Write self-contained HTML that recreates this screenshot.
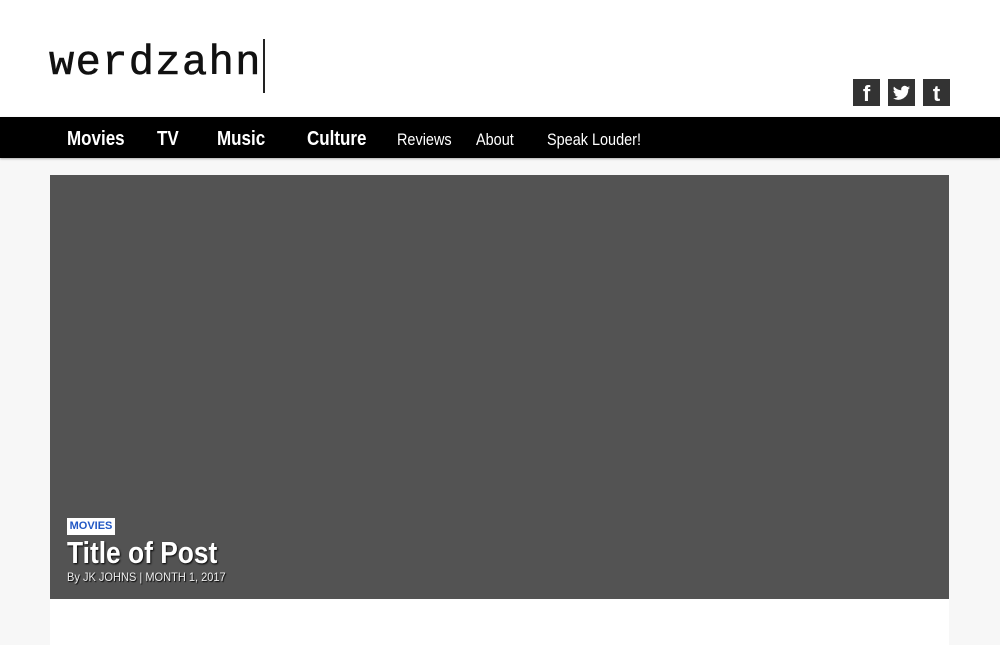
<!DOCTYPE html>
<html><head><meta charset="utf-8"><style>
*{margin:0;padding:0;box-sizing:border-box}
body{width:1000px;height:640px;overflow:hidden;background:#f7f7f7;font-family:"Liberation Sans",sans-serif;position:relative}
.header{position:absolute;left:0;top:0;width:1000px;height:117px;background:#fff}
.logo{position:absolute;left:49px;top:39px;font-family:"Liberation Mono",monospace;font-size:42px;color:#111;letter-spacing:1.4px;-webkit-text-stroke:0.6px #111}
.cursor{position:absolute;left:263px;top:39px;width:2px;height:54px;background:#222}
.soc{position:absolute;top:79px;width:27px;height:27px;background:#333;color:#fff;font-weight:bold;text-align:center;line-height:29px;font-size:22px}
.nav{position:absolute;left:0;top:117px;width:1000px;height:41px;background:#000;box-shadow:0 1px 2px rgba(0,0,0,.3)}
.nav span{position:absolute;top:11px;color:#fff;font-size:20px;font-weight:bold;transform:scaleX(.85);transform-origin:0 0;white-space:nowrap}
.nav span.l{font-weight:normal;font-size:17px;top:13px}
.panel{position:absolute;left:50px;top:175px;width:899px;height:470px;background:#fff}
.img{position:absolute;left:50px;top:175px;width:899px;height:424px;background:#535353}
.tag{position:absolute;left:67px;top:518px;width:48px;height:17px;background:#fff;color:#2157c4;font-size:11px;font-weight:bold;text-align:center;line-height:17px}
.title{position:absolute;left:67px;top:535px;color:#fff;font-size:31px;font-weight:bold;text-shadow:1px 1px 2px #000;transform:scaleX(.85);transform-origin:0 0;white-space:nowrap}
.by{position:absolute;left:67px;top:570px;color:#eee;font-size:12px;text-shadow:1px 1px 1px #000;transform:scaleX(.92);transform-origin:0 0;white-space:nowrap}
</style></head><body>
<div class="header">
<div class="logo">werdzahn</div><div class="cursor"></div>
<div class="soc" style="left:853px">f</div>
<div class="soc" style="left:888px"><svg width="27" height="27" viewBox="0 0 27 27"><path fill="#fff" d="M22 8.5c-.6.3-1.3.5-2 .6.7-.4 1.3-1.1 1.5-1.9-.7.4-1.4.7-2.2.8a3.5 3.5 0 0 0-6 3.2C10.400 11.100 7.800 9.700 6 7.600c-.9 1.600-.4 3.600 1.100 4.600-.6 0-1.100-.2-1.600-.4 0 1.700 1.200 3.100 2.800 3.400-.5.1-1 .2-1.600.1.400 1.400 1.700 2.400 3.300 2.400A7 7 0 0 1 5 19.200 10 10 0 0 0 20.300 10.300c.7-.5 1.300-1.100 1.700-1.800z"/></svg></div>
<div class="soc" style="left:923px">t</div>
</div>
<div class="nav">
<span style="left:67px">Movies</span>
<span style="left:157px">TV</span>
<span style="left:217px">Music</span>
<span style="left:307px">Culture</span>
<span class="l" style="left:397px">Reviews</span>
<span class="l" style="left:476px">About</span>
<span class="l" style="left:547px">Speak Louder!</span>
</div>
<div class="panel"></div>
<div class="img"></div>
<div class="tag">MOVIES</div>
<div class="title">Title of Post</div>
<div class="by">By JK JOHNS | MONTH 1, 2017</div>
</body></html>
